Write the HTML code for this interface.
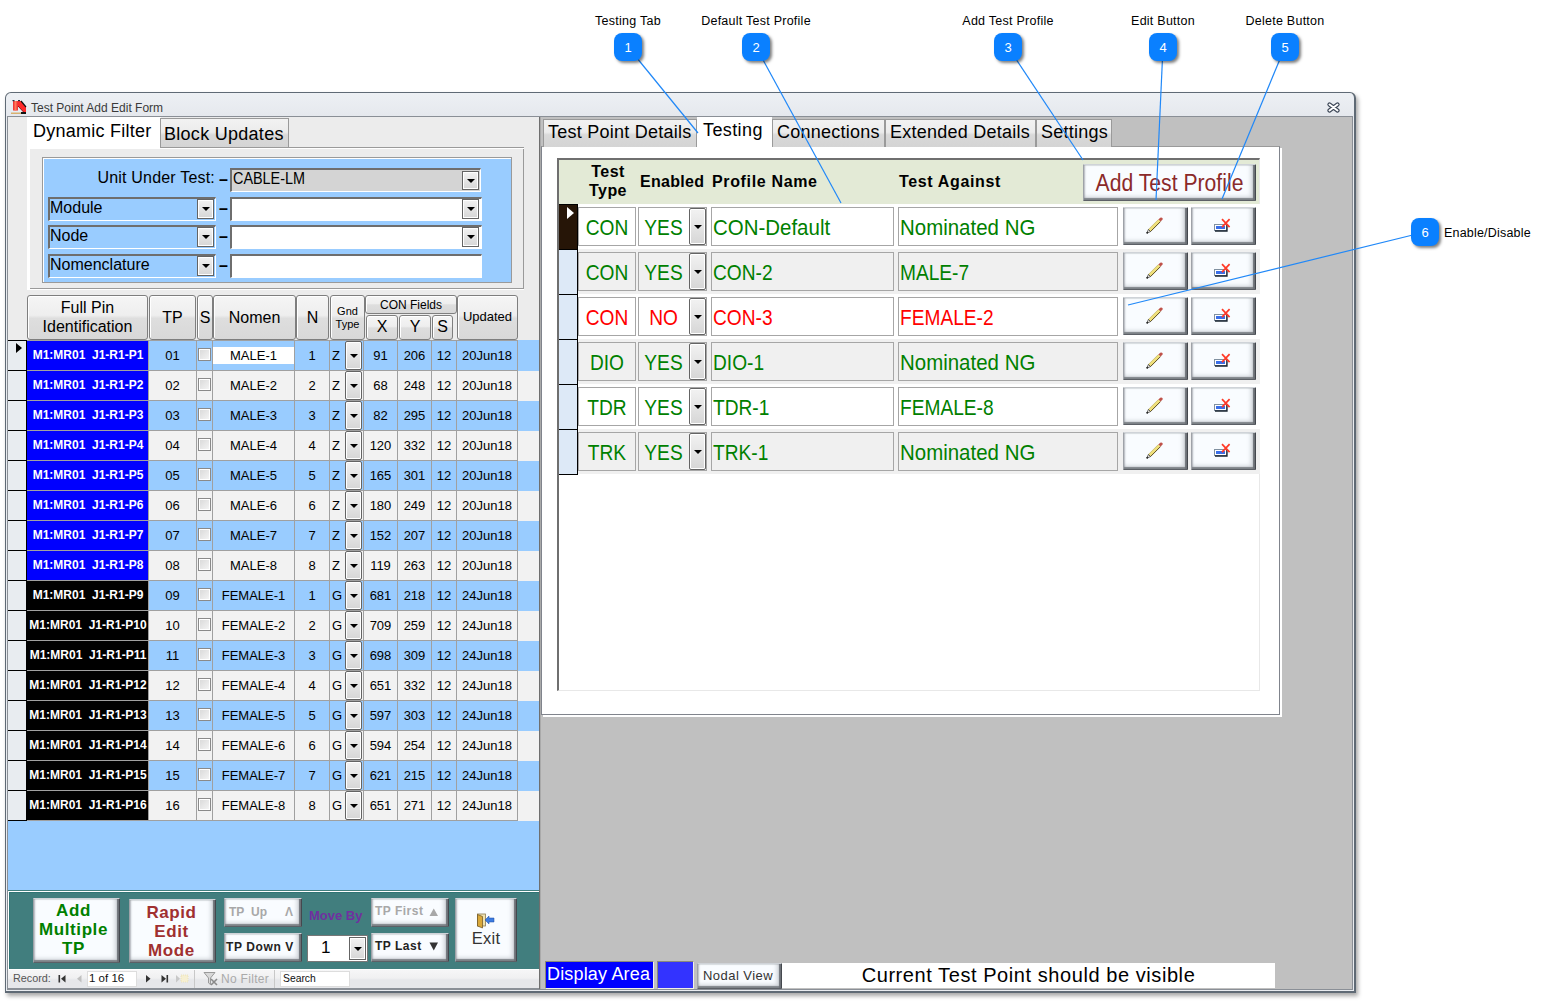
<!DOCTYPE html><html><head><meta charset="utf-8"><style>
*{box-sizing:border-box;margin:0;padding:0}
html,body{width:1547px;height:1002px;overflow:hidden;background:#fff}
body{position:relative;font-family:"Liberation Sans",sans-serif;color:#000}
.a{position:absolute}
.t{position:absolute;white-space:nowrap;line-height:1}
.bev{position:absolute;background:#f9fcff;border-top:1px solid #cfd3d8;border-left:1px solid #9ea2a8;border-right:1px solid #44484e;border-bottom:1px solid #5c6066;border-radius:1px;
 box-shadow:inset -2px 0 1px #6c7076, inset 0 -2px 1px #80848a, inset -5px -4px 4px -1px rgba(120,126,134,.35), inset 2px 1px 2px -1px #b8bcc2}
.hdr{position:absolute;border:1px solid #7e7e7e;border-radius:3px;background:linear-gradient(#f5f5f5 0%,#eeeeee 45%,#dedede 52%,#d8d8d8 100%);box-shadow:inset 1px 1px 0 #fff}
.cb{position:absolute;width:13px;height:13px;border:1px solid #8a8a8a;background:linear-gradient(135deg,#d8d8d8,#f6f6f6);box-shadow:inset 0 0 0 1px #fff}
.dd{position:absolute;border:1px solid #646464;background:linear-gradient(#f2f2f2,#e6e6e6 45%,#d6d6d6);box-shadow:inset 0 0 0 1px #fff}
.dd:after{content:"";position:absolute;left:50%;top:50%;margin-left:-4px;margin-top:-2px;border-left:4px solid transparent;border-right:4px solid transparent;border-top:4px solid #000}
</style></head><body>
<div class="a" style="left:5px;top:92px;width:1351px;height:901px;border:1px solid #5f6a75;border-right-width:2px;border-bottom-width:2px;border-radius:6px 6px 0 0;background:linear-gradient(#edf0f4 0px,#e5e8ed 24px,#e9ecf0 25px);box-shadow:2px 3px 4px rgba(0,0,0,.35)"></div>
<svg class="a" style="left:11px;top:100px" width="16" height="15" viewBox="0 0 16 15"><rect x="0" y="9" width="15" height="5" fill="#e4eef5"/><rect x="0" y="12.5" width="11" height="1.5" fill="#d8b070"/><rect x="10" y="12" width="5" height="2" fill="#111"/><rect x="2" y="1" width="5" height="9.5" fill="#f03838"/><rect x="3.5" y="1" width="2" height="9.5" fill="#ff7a5a"/><path d="M7 1 L10 1 L15 7 L15 12 L12.5 12 L7 6Z" fill="#ff2a2a"/><path d="M10 1 L15 7" stroke="#111" stroke-width="1.2"/><path d="M7 6 L12.5 12" stroke="#700" stroke-width=".8"/><rect x="1.5" y="0" width="2" height="1.2" fill="#234"/><rect x="7" y="0" width="2" height="1.2" fill="#234"/></svg>
<div class="t" style="left:31px;top:102px;font-size:12px;color:#3a3a3a">Test Point Add Edit Form</div>
<svg class="a" style="left:1327px;top:102px" width="13" height="11"><path d="M2.5 2.5 L10.5 8.5 M10.5 2.5 L2.5 8.5" stroke="#3c4656" stroke-width="4.2" stroke-linecap="round"/><path d="M2.5 2.5 L10.5 8.5 M10.5 2.5 L2.5 8.5" stroke="#fff" stroke-width="2" stroke-linecap="round"/></svg>
<div class="a" style="left:7px;top:116px;width:1346px;height:874px;border:1px solid #8a8f96;border-bottom:2px solid #8a8f96;background:#ececec"></div>
<div class="a" style="left:27px;top:117px;width:134px;height:33px;background:#fff"></div>
<div class="t" style="left:33px;top:122px;font-size:18px;letter-spacing:.25px">Dynamic Filter</div>
<div class="a" style="left:160px;top:118px;width:129px;height:30px;border:1px solid #9a9a9a;border-bottom:none;background:linear-gradient(#f2f2f2 0%,#ececec 45%,#d9d9d9 55%,#d4d4d4 100%)"></div>
<div class="t" style="left:164px;top:125px;font-size:18px;letter-spacing:.28px">Block Updates</div>
<div class="a" style="left:27px;top:147px;width:497px;height:143px;background:#fff"></div>
<div class="a" style="left:160px;top:147px;width:364px;height:1px;background:#9a9a9a"></div>
<div class="a" style="left:30px;top:149px;width:494px;height:140px;background:#ececec;border-right:1px solid #9a9a9a;border-bottom:1px solid #9a9a9a"></div>
<div class="a" style="left:42px;top:157px;width:470px;height:126px;border:1px solid #9a9a9a;background:#99ccff;box-shadow:inset 1px 1px 0 #fff"></div>
<div class="t" style="left:60px;top:170px;width:155px;text-align:right;font-size:16px;letter-spacing:.2px">Unit Under Test:</div>
<div class="t" style="left:219px;top:172px;font-size:16px;font-weight:bold">&#8211;</div>
<div class="t" style="left:219px;top:201px;font-size:16px;font-weight:bold">&#8211;</div>
<div class="t" style="left:219px;top:229px;font-size:16px;font-weight:bold">&#8211;</div>
<div class="t" style="left:219px;top:258px;font-size:16px;font-weight:bold">&#8211;</div>
<div class="a" style="left:230px;top:168px;width:251px;height:24px;border:1px solid #fff;border-top:2px solid #6e6e6e;border-left:2px solid #6e6e6e;background:#d4d4d4"></div>
<div class="t" style="left:233px;top:171px;font-size:16px;transform:scaleX(.9);transform-origin:0 0">CABLE-LM</div>
<div class="dd" style="left:462px;top:171px;width:17px;height:19px"></div>
<div class="a" style="left:48px;top:197px;width:168px;height:24px;border:1px solid #fff;border-top:2px solid #6e6e6e;border-left:2px solid #6e6e6e;background:#99ccff"></div>
<div class="t" style="left:50px;top:200px;font-size:16px">Module</div>
<div class="dd" style="left:197px;top:199px;width:17px;height:20px"></div>
<div class="a" style="left:48px;top:225px;width:168px;height:24px;border:1px solid #fff;border-top:2px solid #6e6e6e;border-left:2px solid #6e6e6e;background:#99ccff"></div>
<div class="t" style="left:50px;top:228px;font-size:16px">Node</div>
<div class="dd" style="left:197px;top:227px;width:17px;height:20px"></div>
<div class="a" style="left:48px;top:254px;width:168px;height:24px;border:1px solid #fff;border-top:2px solid #6e6e6e;border-left:2px solid #6e6e6e;background:#99ccff"></div>
<div class="t" style="left:50px;top:257px;font-size:16px">Nomenclature</div>
<div class="dd" style="left:197px;top:256px;width:17px;height:20px"></div>
<div class="a" style="left:230px;top:197px;width:252px;height:24px;border:1px solid #fff;border-top:2px solid #6e6e6e;border-left:2px solid #6e6e6e;background:#fff"></div>
<div class="a" style="left:230px;top:225px;width:252px;height:24px;border:1px solid #fff;border-top:2px solid #6e6e6e;border-left:2px solid #6e6e6e;background:#fff"></div>
<div class="a" style="left:230px;top:254px;width:252px;height:24px;border:1px solid #fff;border-top:2px solid #6e6e6e;border-left:2px solid #6e6e6e;background:#fff"></div>
<div class="dd" style="left:462px;top:199px;width:17px;height:20px"></div>
<div class="dd" style="left:462px;top:227px;width:17px;height:20px"></div>
<div class="a" style="left:8px;top:290px;width:532px;height:601px;background:#99ccff"></div>
<div class="a" style="left:8px;top:290px;width:532px;height:50px;background:#ececec"></div>
<div class="hdr" style="left:27px;top:295px;width:121px;height:45px"></div>
<div class="t" style="left:27px;top:295px;width:121px;height:45px;display:flex;align-items:center;justify-content:center;text-align:center;font-size:16px;line-height:1.15;white-space:normal;">Full Pin<br>Identification</div>
<div class="hdr" style="left:149px;top:295px;width:47px;height:45px"></div>
<div class="t" style="left:149px;top:295px;width:47px;height:45px;display:flex;align-items:center;justify-content:center;text-align:center;font-size:16px;line-height:1.15;white-space:normal;"><span style="position:relative;top:1px">TP</span></div>
<div class="hdr" style="left:197px;top:295px;width:16px;height:45px"></div>
<div class="t" style="left:197px;top:295px;width:16px;height:45px;display:flex;align-items:center;justify-content:center;text-align:center;font-size:16px;line-height:1.15;white-space:normal;"><span style="position:relative;top:1px">S</span></div>
<div class="hdr" style="left:213px;top:295px;width:83px;height:45px"></div>
<div class="t" style="left:213px;top:295px;width:83px;height:45px;display:flex;align-items:center;justify-content:center;text-align:center;font-size:16px;line-height:1.15;white-space:normal;"><span style="position:relative;top:1px">Nomen</span></div>
<div class="hdr" style="left:296px;top:295px;width:33px;height:45px"></div>
<div class="t" style="left:296px;top:295px;width:33px;height:45px;display:flex;align-items:center;justify-content:center;text-align:center;font-size:16px;line-height:1.15;white-space:normal;"><span style="position:relative;top:1px">N</span></div>
<div class="hdr" style="left:330px;top:295px;width:35px;height:45px"></div>
<div class="t" style="left:330px;top:295px;width:35px;height:45px;display:flex;align-items:center;justify-content:center;text-align:center;font-size:11px;line-height:1.15;white-space:normal;">Gnd<br>Type</div>
<div class="hdr" style="left:365px;top:295px;width:92px;height:19px"></div>
<div class="t" style="left:365px;top:295px;width:92px;height:19px;display:flex;align-items:center;justify-content:center;text-align:center;font-size:12px;line-height:1.15;white-space:normal;"><span style="position:relative;top:1px">CON Fields</span></div>
<div class="hdr" style="left:366px;top:315px;width:32px;height:25px"></div>
<div class="t" style="left:366px;top:315px;width:32px;height:25px;display:flex;align-items:center;justify-content:center;text-align:center;font-size:16px;line-height:1.15;white-space:normal;">X</div>
<div class="hdr" style="left:399px;top:315px;width:32px;height:25px"></div>
<div class="t" style="left:399px;top:315px;width:32px;height:25px;display:flex;align-items:center;justify-content:center;text-align:center;font-size:16px;line-height:1.15;white-space:normal;">Y</div>
<div class="hdr" style="left:432px;top:315px;width:21px;height:25px"></div>
<div class="t" style="left:432px;top:315px;width:21px;height:25px;display:flex;align-items:center;justify-content:center;text-align:center;font-size:16px;line-height:1.15;white-space:normal;">S</div>
<div class="hdr" style="left:457px;top:295px;width:61px;height:45px"></div>
<div class="t" style="left:457px;top:295px;width:61px;height:45px;display:flex;align-items:center;justify-content:center;text-align:center;font-size:13px;line-height:1.15;white-space:normal;">Updated</div>
<div class="a" style="left:27px;top:340px;width:491px;height:31px;background:#99ccff;border-top:1px solid #a0a0a0;border-bottom:1px solid #a0a0a0"></div>
<div class="a" style="left:518px;top:341px;width:21px;height:30px;background:#99ccff"></div>
<div class="a" style="left:8px;top:340px;width:19px;height:31px;background:#e8ecf0;border-top:1px solid #000;border-right:1px solid #000"></div>
<div class="a" style="left:27px;top:341px;width:122px;height:29px;background:#0000ff"></div>
<div class="t" style="left:27px;top:349px;width:122px;text-align:center;font-size:12px;font-weight:bold;color:#fff">M1:MR01&nbsp; J1-R1-P1</div>
<div class="a" style="left:148px;top:340px;width:1px;height:31px;background:#a0a0a0"></div>
<div class="a" style="left:196px;top:340px;width:1px;height:31px;background:#a0a0a0"></div>
<div class="a" style="left:212px;top:340px;width:1px;height:31px;background:#a0a0a0"></div>
<div class="a" style="left:294px;top:340px;width:1px;height:31px;background:#a0a0a0"></div>
<div class="a" style="left:329px;top:340px;width:1px;height:31px;background:#a0a0a0"></div>
<div class="a" style="left:363px;top:340px;width:1px;height:31px;background:#a0a0a0"></div>
<div class="a" style="left:397px;top:340px;width:1px;height:31px;background:#a0a0a0"></div>
<div class="a" style="left:431px;top:340px;width:1px;height:31px;background:#a0a0a0"></div>
<div class="a" style="left:456px;top:340px;width:1px;height:31px;background:#a0a0a0"></div>
<div class="a" style="left:517px;top:340px;width:1px;height:31px;background:#a0a0a0"></div>
<div class="t" style="left:149px;top:349px;width:47px;text-align:center;font-size:13px">01</div>
<div class="cb" style="left:198px;top:348px"></div>
<div class="a" style="left:213px;top:347px;width:81px;height:17px;background:#fff"></div>
<div class="t" style="left:213px;top:349px;width:81px;text-align:center;font-size:13px">MALE-1</div>
<div class="t" style="left:295px;top:349px;width:34px;text-align:center;font-size:13px">1</div>
<div class="t" style="left:332px;top:349px;font-size:13px">Z</div>
<div class="dd" style="left:345px;top:341px;width:17px;height:29px;border-radius:2px"></div>
<div class="t" style="left:364px;top:349px;width:33px;text-align:center;font-size:13px">91</div>
<div class="t" style="left:398px;top:349px;width:33px;text-align:center;font-size:13px">206</div>
<div class="t" style="left:432px;top:349px;width:24px;text-align:center;font-size:13px">12</div>
<div class="t" style="left:457px;top:349px;width:60px;text-align:center;font-size:13px">20Jun18</div>
<div class="a" style="left:16px;top:343px;width:0;height:0;border-top:5.5px solid transparent;border-bottom:5.5px solid transparent;border-left:6px solid #000"></div>
<div class="a" style="left:27px;top:370px;width:491px;height:31px;background:#f2f2f2;border-top:1px solid #a0a0a0;border-bottom:1px solid #a0a0a0"></div>
<div class="a" style="left:518px;top:371px;width:21px;height:30px;background:#f2f2f2"></div>
<div class="a" style="left:8px;top:370px;width:19px;height:31px;background:#e8ecf0;border-top:1px solid #000;border-right:1px solid #000"></div>
<div class="a" style="left:27px;top:371px;width:122px;height:29px;background:#0000ff"></div>
<div class="t" style="left:27px;top:379px;width:122px;text-align:center;font-size:12px;font-weight:bold;color:#fff">M1:MR01&nbsp; J1-R1-P2</div>
<div class="a" style="left:148px;top:370px;width:1px;height:31px;background:#a0a0a0"></div>
<div class="a" style="left:196px;top:370px;width:1px;height:31px;background:#a0a0a0"></div>
<div class="a" style="left:212px;top:370px;width:1px;height:31px;background:#a0a0a0"></div>
<div class="a" style="left:294px;top:370px;width:1px;height:31px;background:#a0a0a0"></div>
<div class="a" style="left:329px;top:370px;width:1px;height:31px;background:#a0a0a0"></div>
<div class="a" style="left:363px;top:370px;width:1px;height:31px;background:#a0a0a0"></div>
<div class="a" style="left:397px;top:370px;width:1px;height:31px;background:#a0a0a0"></div>
<div class="a" style="left:431px;top:370px;width:1px;height:31px;background:#a0a0a0"></div>
<div class="a" style="left:456px;top:370px;width:1px;height:31px;background:#a0a0a0"></div>
<div class="a" style="left:517px;top:370px;width:1px;height:31px;background:#a0a0a0"></div>
<div class="t" style="left:149px;top:379px;width:47px;text-align:center;font-size:13px">02</div>
<div class="cb" style="left:198px;top:378px"></div>
<div class="t" style="left:213px;top:379px;width:81px;text-align:center;font-size:13px">MALE-2</div>
<div class="t" style="left:295px;top:379px;width:34px;text-align:center;font-size:13px">2</div>
<div class="t" style="left:332px;top:379px;font-size:13px">Z</div>
<div class="dd" style="left:345px;top:371px;width:17px;height:29px;border-radius:2px"></div>
<div class="t" style="left:364px;top:379px;width:33px;text-align:center;font-size:13px">68</div>
<div class="t" style="left:398px;top:379px;width:33px;text-align:center;font-size:13px">248</div>
<div class="t" style="left:432px;top:379px;width:24px;text-align:center;font-size:13px">12</div>
<div class="t" style="left:457px;top:379px;width:60px;text-align:center;font-size:13px">20Jun18</div>
<div class="a" style="left:27px;top:400px;width:491px;height:31px;background:#99ccff;border-top:1px solid #a0a0a0;border-bottom:1px solid #a0a0a0"></div>
<div class="a" style="left:518px;top:401px;width:21px;height:30px;background:#99ccff"></div>
<div class="a" style="left:8px;top:400px;width:19px;height:31px;background:#e8ecf0;border-top:1px solid #000;border-right:1px solid #000"></div>
<div class="a" style="left:27px;top:401px;width:122px;height:29px;background:#0000ff"></div>
<div class="t" style="left:27px;top:409px;width:122px;text-align:center;font-size:12px;font-weight:bold;color:#fff">M1:MR01&nbsp; J1-R1-P3</div>
<div class="a" style="left:148px;top:400px;width:1px;height:31px;background:#a0a0a0"></div>
<div class="a" style="left:196px;top:400px;width:1px;height:31px;background:#a0a0a0"></div>
<div class="a" style="left:212px;top:400px;width:1px;height:31px;background:#a0a0a0"></div>
<div class="a" style="left:294px;top:400px;width:1px;height:31px;background:#a0a0a0"></div>
<div class="a" style="left:329px;top:400px;width:1px;height:31px;background:#a0a0a0"></div>
<div class="a" style="left:363px;top:400px;width:1px;height:31px;background:#a0a0a0"></div>
<div class="a" style="left:397px;top:400px;width:1px;height:31px;background:#a0a0a0"></div>
<div class="a" style="left:431px;top:400px;width:1px;height:31px;background:#a0a0a0"></div>
<div class="a" style="left:456px;top:400px;width:1px;height:31px;background:#a0a0a0"></div>
<div class="a" style="left:517px;top:400px;width:1px;height:31px;background:#a0a0a0"></div>
<div class="t" style="left:149px;top:409px;width:47px;text-align:center;font-size:13px">03</div>
<div class="cb" style="left:198px;top:408px"></div>
<div class="t" style="left:213px;top:409px;width:81px;text-align:center;font-size:13px">MALE-3</div>
<div class="t" style="left:295px;top:409px;width:34px;text-align:center;font-size:13px">3</div>
<div class="t" style="left:332px;top:409px;font-size:13px">Z</div>
<div class="dd" style="left:345px;top:401px;width:17px;height:29px;border-radius:2px"></div>
<div class="t" style="left:364px;top:409px;width:33px;text-align:center;font-size:13px">82</div>
<div class="t" style="left:398px;top:409px;width:33px;text-align:center;font-size:13px">295</div>
<div class="t" style="left:432px;top:409px;width:24px;text-align:center;font-size:13px">12</div>
<div class="t" style="left:457px;top:409px;width:60px;text-align:center;font-size:13px">20Jun18</div>
<div class="a" style="left:27px;top:430px;width:491px;height:31px;background:#f2f2f2;border-top:1px solid #a0a0a0;border-bottom:1px solid #a0a0a0"></div>
<div class="a" style="left:518px;top:431px;width:21px;height:30px;background:#f2f2f2"></div>
<div class="a" style="left:8px;top:430px;width:19px;height:31px;background:#e8ecf0;border-top:1px solid #000;border-right:1px solid #000"></div>
<div class="a" style="left:27px;top:431px;width:122px;height:29px;background:#0000ff"></div>
<div class="t" style="left:27px;top:439px;width:122px;text-align:center;font-size:12px;font-weight:bold;color:#fff">M1:MR01&nbsp; J1-R1-P4</div>
<div class="a" style="left:148px;top:430px;width:1px;height:31px;background:#a0a0a0"></div>
<div class="a" style="left:196px;top:430px;width:1px;height:31px;background:#a0a0a0"></div>
<div class="a" style="left:212px;top:430px;width:1px;height:31px;background:#a0a0a0"></div>
<div class="a" style="left:294px;top:430px;width:1px;height:31px;background:#a0a0a0"></div>
<div class="a" style="left:329px;top:430px;width:1px;height:31px;background:#a0a0a0"></div>
<div class="a" style="left:363px;top:430px;width:1px;height:31px;background:#a0a0a0"></div>
<div class="a" style="left:397px;top:430px;width:1px;height:31px;background:#a0a0a0"></div>
<div class="a" style="left:431px;top:430px;width:1px;height:31px;background:#a0a0a0"></div>
<div class="a" style="left:456px;top:430px;width:1px;height:31px;background:#a0a0a0"></div>
<div class="a" style="left:517px;top:430px;width:1px;height:31px;background:#a0a0a0"></div>
<div class="t" style="left:149px;top:439px;width:47px;text-align:center;font-size:13px">04</div>
<div class="cb" style="left:198px;top:438px"></div>
<div class="t" style="left:213px;top:439px;width:81px;text-align:center;font-size:13px">MALE-4</div>
<div class="t" style="left:295px;top:439px;width:34px;text-align:center;font-size:13px">4</div>
<div class="t" style="left:332px;top:439px;font-size:13px">Z</div>
<div class="dd" style="left:345px;top:431px;width:17px;height:29px;border-radius:2px"></div>
<div class="t" style="left:364px;top:439px;width:33px;text-align:center;font-size:13px">120</div>
<div class="t" style="left:398px;top:439px;width:33px;text-align:center;font-size:13px">332</div>
<div class="t" style="left:432px;top:439px;width:24px;text-align:center;font-size:13px">12</div>
<div class="t" style="left:457px;top:439px;width:60px;text-align:center;font-size:13px">20Jun18</div>
<div class="a" style="left:27px;top:460px;width:491px;height:31px;background:#99ccff;border-top:1px solid #a0a0a0;border-bottom:1px solid #a0a0a0"></div>
<div class="a" style="left:518px;top:461px;width:21px;height:30px;background:#99ccff"></div>
<div class="a" style="left:8px;top:460px;width:19px;height:31px;background:#e8ecf0;border-top:1px solid #000;border-right:1px solid #000"></div>
<div class="a" style="left:27px;top:461px;width:122px;height:29px;background:#0000ff"></div>
<div class="t" style="left:27px;top:469px;width:122px;text-align:center;font-size:12px;font-weight:bold;color:#fff">M1:MR01&nbsp; J1-R1-P5</div>
<div class="a" style="left:148px;top:460px;width:1px;height:31px;background:#a0a0a0"></div>
<div class="a" style="left:196px;top:460px;width:1px;height:31px;background:#a0a0a0"></div>
<div class="a" style="left:212px;top:460px;width:1px;height:31px;background:#a0a0a0"></div>
<div class="a" style="left:294px;top:460px;width:1px;height:31px;background:#a0a0a0"></div>
<div class="a" style="left:329px;top:460px;width:1px;height:31px;background:#a0a0a0"></div>
<div class="a" style="left:363px;top:460px;width:1px;height:31px;background:#a0a0a0"></div>
<div class="a" style="left:397px;top:460px;width:1px;height:31px;background:#a0a0a0"></div>
<div class="a" style="left:431px;top:460px;width:1px;height:31px;background:#a0a0a0"></div>
<div class="a" style="left:456px;top:460px;width:1px;height:31px;background:#a0a0a0"></div>
<div class="a" style="left:517px;top:460px;width:1px;height:31px;background:#a0a0a0"></div>
<div class="t" style="left:149px;top:469px;width:47px;text-align:center;font-size:13px">05</div>
<div class="cb" style="left:198px;top:468px"></div>
<div class="t" style="left:213px;top:469px;width:81px;text-align:center;font-size:13px">MALE-5</div>
<div class="t" style="left:295px;top:469px;width:34px;text-align:center;font-size:13px">5</div>
<div class="t" style="left:332px;top:469px;font-size:13px">Z</div>
<div class="dd" style="left:345px;top:461px;width:17px;height:29px;border-radius:2px"></div>
<div class="t" style="left:364px;top:469px;width:33px;text-align:center;font-size:13px">165</div>
<div class="t" style="left:398px;top:469px;width:33px;text-align:center;font-size:13px">301</div>
<div class="t" style="left:432px;top:469px;width:24px;text-align:center;font-size:13px">12</div>
<div class="t" style="left:457px;top:469px;width:60px;text-align:center;font-size:13px">20Jun18</div>
<div class="a" style="left:27px;top:490px;width:491px;height:31px;background:#f2f2f2;border-top:1px solid #a0a0a0;border-bottom:1px solid #a0a0a0"></div>
<div class="a" style="left:518px;top:491px;width:21px;height:30px;background:#f2f2f2"></div>
<div class="a" style="left:8px;top:490px;width:19px;height:31px;background:#e8ecf0;border-top:1px solid #000;border-right:1px solid #000"></div>
<div class="a" style="left:27px;top:491px;width:122px;height:29px;background:#0000ff"></div>
<div class="t" style="left:27px;top:499px;width:122px;text-align:center;font-size:12px;font-weight:bold;color:#fff">M1:MR01&nbsp; J1-R1-P6</div>
<div class="a" style="left:148px;top:490px;width:1px;height:31px;background:#a0a0a0"></div>
<div class="a" style="left:196px;top:490px;width:1px;height:31px;background:#a0a0a0"></div>
<div class="a" style="left:212px;top:490px;width:1px;height:31px;background:#a0a0a0"></div>
<div class="a" style="left:294px;top:490px;width:1px;height:31px;background:#a0a0a0"></div>
<div class="a" style="left:329px;top:490px;width:1px;height:31px;background:#a0a0a0"></div>
<div class="a" style="left:363px;top:490px;width:1px;height:31px;background:#a0a0a0"></div>
<div class="a" style="left:397px;top:490px;width:1px;height:31px;background:#a0a0a0"></div>
<div class="a" style="left:431px;top:490px;width:1px;height:31px;background:#a0a0a0"></div>
<div class="a" style="left:456px;top:490px;width:1px;height:31px;background:#a0a0a0"></div>
<div class="a" style="left:517px;top:490px;width:1px;height:31px;background:#a0a0a0"></div>
<div class="t" style="left:149px;top:499px;width:47px;text-align:center;font-size:13px">06</div>
<div class="cb" style="left:198px;top:498px"></div>
<div class="t" style="left:213px;top:499px;width:81px;text-align:center;font-size:13px">MALE-6</div>
<div class="t" style="left:295px;top:499px;width:34px;text-align:center;font-size:13px">6</div>
<div class="t" style="left:332px;top:499px;font-size:13px">Z</div>
<div class="dd" style="left:345px;top:491px;width:17px;height:29px;border-radius:2px"></div>
<div class="t" style="left:364px;top:499px;width:33px;text-align:center;font-size:13px">180</div>
<div class="t" style="left:398px;top:499px;width:33px;text-align:center;font-size:13px">249</div>
<div class="t" style="left:432px;top:499px;width:24px;text-align:center;font-size:13px">12</div>
<div class="t" style="left:457px;top:499px;width:60px;text-align:center;font-size:13px">20Jun18</div>
<div class="a" style="left:27px;top:520px;width:491px;height:31px;background:#99ccff;border-top:1px solid #a0a0a0;border-bottom:1px solid #a0a0a0"></div>
<div class="a" style="left:518px;top:521px;width:21px;height:30px;background:#99ccff"></div>
<div class="a" style="left:8px;top:520px;width:19px;height:31px;background:#e8ecf0;border-top:1px solid #000;border-right:1px solid #000"></div>
<div class="a" style="left:27px;top:521px;width:122px;height:29px;background:#0000ff"></div>
<div class="t" style="left:27px;top:529px;width:122px;text-align:center;font-size:12px;font-weight:bold;color:#fff">M1:MR01&nbsp; J1-R1-P7</div>
<div class="a" style="left:148px;top:520px;width:1px;height:31px;background:#a0a0a0"></div>
<div class="a" style="left:196px;top:520px;width:1px;height:31px;background:#a0a0a0"></div>
<div class="a" style="left:212px;top:520px;width:1px;height:31px;background:#a0a0a0"></div>
<div class="a" style="left:294px;top:520px;width:1px;height:31px;background:#a0a0a0"></div>
<div class="a" style="left:329px;top:520px;width:1px;height:31px;background:#a0a0a0"></div>
<div class="a" style="left:363px;top:520px;width:1px;height:31px;background:#a0a0a0"></div>
<div class="a" style="left:397px;top:520px;width:1px;height:31px;background:#a0a0a0"></div>
<div class="a" style="left:431px;top:520px;width:1px;height:31px;background:#a0a0a0"></div>
<div class="a" style="left:456px;top:520px;width:1px;height:31px;background:#a0a0a0"></div>
<div class="a" style="left:517px;top:520px;width:1px;height:31px;background:#a0a0a0"></div>
<div class="t" style="left:149px;top:529px;width:47px;text-align:center;font-size:13px">07</div>
<div class="cb" style="left:198px;top:528px"></div>
<div class="t" style="left:213px;top:529px;width:81px;text-align:center;font-size:13px">MALE-7</div>
<div class="t" style="left:295px;top:529px;width:34px;text-align:center;font-size:13px">7</div>
<div class="t" style="left:332px;top:529px;font-size:13px">Z</div>
<div class="dd" style="left:345px;top:521px;width:17px;height:29px;border-radius:2px"></div>
<div class="t" style="left:364px;top:529px;width:33px;text-align:center;font-size:13px">152</div>
<div class="t" style="left:398px;top:529px;width:33px;text-align:center;font-size:13px">207</div>
<div class="t" style="left:432px;top:529px;width:24px;text-align:center;font-size:13px">12</div>
<div class="t" style="left:457px;top:529px;width:60px;text-align:center;font-size:13px">20Jun18</div>
<div class="a" style="left:27px;top:550px;width:491px;height:31px;background:#f2f2f2;border-top:1px solid #a0a0a0;border-bottom:1px solid #a0a0a0"></div>
<div class="a" style="left:518px;top:551px;width:21px;height:30px;background:#f2f2f2"></div>
<div class="a" style="left:8px;top:550px;width:19px;height:31px;background:#e8ecf0;border-top:1px solid #000;border-right:1px solid #000"></div>
<div class="a" style="left:27px;top:551px;width:122px;height:29px;background:#0000ff"></div>
<div class="t" style="left:27px;top:559px;width:122px;text-align:center;font-size:12px;font-weight:bold;color:#fff">M1:MR01&nbsp; J1-R1-P8</div>
<div class="a" style="left:148px;top:550px;width:1px;height:31px;background:#a0a0a0"></div>
<div class="a" style="left:196px;top:550px;width:1px;height:31px;background:#a0a0a0"></div>
<div class="a" style="left:212px;top:550px;width:1px;height:31px;background:#a0a0a0"></div>
<div class="a" style="left:294px;top:550px;width:1px;height:31px;background:#a0a0a0"></div>
<div class="a" style="left:329px;top:550px;width:1px;height:31px;background:#a0a0a0"></div>
<div class="a" style="left:363px;top:550px;width:1px;height:31px;background:#a0a0a0"></div>
<div class="a" style="left:397px;top:550px;width:1px;height:31px;background:#a0a0a0"></div>
<div class="a" style="left:431px;top:550px;width:1px;height:31px;background:#a0a0a0"></div>
<div class="a" style="left:456px;top:550px;width:1px;height:31px;background:#a0a0a0"></div>
<div class="a" style="left:517px;top:550px;width:1px;height:31px;background:#a0a0a0"></div>
<div class="t" style="left:149px;top:559px;width:47px;text-align:center;font-size:13px">08</div>
<div class="cb" style="left:198px;top:558px"></div>
<div class="t" style="left:213px;top:559px;width:81px;text-align:center;font-size:13px">MALE-8</div>
<div class="t" style="left:295px;top:559px;width:34px;text-align:center;font-size:13px">8</div>
<div class="t" style="left:332px;top:559px;font-size:13px">Z</div>
<div class="dd" style="left:345px;top:551px;width:17px;height:29px;border-radius:2px"></div>
<div class="t" style="left:364px;top:559px;width:33px;text-align:center;font-size:13px">119</div>
<div class="t" style="left:398px;top:559px;width:33px;text-align:center;font-size:13px">263</div>
<div class="t" style="left:432px;top:559px;width:24px;text-align:center;font-size:13px">12</div>
<div class="t" style="left:457px;top:559px;width:60px;text-align:center;font-size:13px">20Jun18</div>
<div class="a" style="left:27px;top:580px;width:491px;height:31px;background:#99ccff;border-top:1px solid #a0a0a0;border-bottom:1px solid #a0a0a0"></div>
<div class="a" style="left:518px;top:581px;width:21px;height:30px;background:#99ccff"></div>
<div class="a" style="left:8px;top:580px;width:19px;height:31px;background:#e8ecf0;border-top:1px solid #000;border-right:1px solid #000"></div>
<div class="a" style="left:27px;top:581px;width:122px;height:29px;background:#000"></div>
<div class="t" style="left:27px;top:589px;width:122px;text-align:center;font-size:12px;font-weight:bold;color:#fff">M1:MR01&nbsp; J1-R1-P9</div>
<div class="a" style="left:148px;top:580px;width:1px;height:31px;background:#a0a0a0"></div>
<div class="a" style="left:196px;top:580px;width:1px;height:31px;background:#a0a0a0"></div>
<div class="a" style="left:212px;top:580px;width:1px;height:31px;background:#a0a0a0"></div>
<div class="a" style="left:294px;top:580px;width:1px;height:31px;background:#a0a0a0"></div>
<div class="a" style="left:329px;top:580px;width:1px;height:31px;background:#a0a0a0"></div>
<div class="a" style="left:363px;top:580px;width:1px;height:31px;background:#a0a0a0"></div>
<div class="a" style="left:397px;top:580px;width:1px;height:31px;background:#a0a0a0"></div>
<div class="a" style="left:431px;top:580px;width:1px;height:31px;background:#a0a0a0"></div>
<div class="a" style="left:456px;top:580px;width:1px;height:31px;background:#a0a0a0"></div>
<div class="a" style="left:517px;top:580px;width:1px;height:31px;background:#a0a0a0"></div>
<div class="t" style="left:149px;top:589px;width:47px;text-align:center;font-size:13px">09</div>
<div class="cb" style="left:198px;top:588px"></div>
<div class="t" style="left:213px;top:589px;width:81px;text-align:center;font-size:13px">FEMALE-1</div>
<div class="t" style="left:295px;top:589px;width:34px;text-align:center;font-size:13px">1</div>
<div class="t" style="left:332px;top:589px;font-size:13px">G</div>
<div class="dd" style="left:345px;top:581px;width:17px;height:29px;border-radius:2px"></div>
<div class="t" style="left:364px;top:589px;width:33px;text-align:center;font-size:13px">681</div>
<div class="t" style="left:398px;top:589px;width:33px;text-align:center;font-size:13px">218</div>
<div class="t" style="left:432px;top:589px;width:24px;text-align:center;font-size:13px">12</div>
<div class="t" style="left:457px;top:589px;width:60px;text-align:center;font-size:13px">24Jun18</div>
<div class="a" style="left:27px;top:610px;width:491px;height:31px;background:#f2f2f2;border-top:1px solid #a0a0a0;border-bottom:1px solid #a0a0a0"></div>
<div class="a" style="left:518px;top:611px;width:21px;height:30px;background:#f2f2f2"></div>
<div class="a" style="left:8px;top:610px;width:19px;height:31px;background:#e8ecf0;border-top:1px solid #000;border-right:1px solid #000"></div>
<div class="a" style="left:27px;top:611px;width:122px;height:29px;background:#000"></div>
<div class="t" style="left:27px;top:619px;width:122px;text-align:center;font-size:12px;font-weight:bold;color:#fff">M1:MR01&nbsp; J1-R1-P10</div>
<div class="a" style="left:148px;top:610px;width:1px;height:31px;background:#a0a0a0"></div>
<div class="a" style="left:196px;top:610px;width:1px;height:31px;background:#a0a0a0"></div>
<div class="a" style="left:212px;top:610px;width:1px;height:31px;background:#a0a0a0"></div>
<div class="a" style="left:294px;top:610px;width:1px;height:31px;background:#a0a0a0"></div>
<div class="a" style="left:329px;top:610px;width:1px;height:31px;background:#a0a0a0"></div>
<div class="a" style="left:363px;top:610px;width:1px;height:31px;background:#a0a0a0"></div>
<div class="a" style="left:397px;top:610px;width:1px;height:31px;background:#a0a0a0"></div>
<div class="a" style="left:431px;top:610px;width:1px;height:31px;background:#a0a0a0"></div>
<div class="a" style="left:456px;top:610px;width:1px;height:31px;background:#a0a0a0"></div>
<div class="a" style="left:517px;top:610px;width:1px;height:31px;background:#a0a0a0"></div>
<div class="t" style="left:149px;top:619px;width:47px;text-align:center;font-size:13px">10</div>
<div class="cb" style="left:198px;top:618px"></div>
<div class="t" style="left:213px;top:619px;width:81px;text-align:center;font-size:13px">FEMALE-2</div>
<div class="t" style="left:295px;top:619px;width:34px;text-align:center;font-size:13px">2</div>
<div class="t" style="left:332px;top:619px;font-size:13px">G</div>
<div class="dd" style="left:345px;top:611px;width:17px;height:29px;border-radius:2px"></div>
<div class="t" style="left:364px;top:619px;width:33px;text-align:center;font-size:13px">709</div>
<div class="t" style="left:398px;top:619px;width:33px;text-align:center;font-size:13px">259</div>
<div class="t" style="left:432px;top:619px;width:24px;text-align:center;font-size:13px">12</div>
<div class="t" style="left:457px;top:619px;width:60px;text-align:center;font-size:13px">24Jun18</div>
<div class="a" style="left:27px;top:640px;width:491px;height:31px;background:#99ccff;border-top:1px solid #a0a0a0;border-bottom:1px solid #a0a0a0"></div>
<div class="a" style="left:518px;top:641px;width:21px;height:30px;background:#99ccff"></div>
<div class="a" style="left:8px;top:640px;width:19px;height:31px;background:#e8ecf0;border-top:1px solid #000;border-right:1px solid #000"></div>
<div class="a" style="left:27px;top:641px;width:122px;height:29px;background:#000"></div>
<div class="t" style="left:27px;top:649px;width:122px;text-align:center;font-size:12px;font-weight:bold;color:#fff">M1:MR01&nbsp; J1-R1-P11</div>
<div class="a" style="left:148px;top:640px;width:1px;height:31px;background:#a0a0a0"></div>
<div class="a" style="left:196px;top:640px;width:1px;height:31px;background:#a0a0a0"></div>
<div class="a" style="left:212px;top:640px;width:1px;height:31px;background:#a0a0a0"></div>
<div class="a" style="left:294px;top:640px;width:1px;height:31px;background:#a0a0a0"></div>
<div class="a" style="left:329px;top:640px;width:1px;height:31px;background:#a0a0a0"></div>
<div class="a" style="left:363px;top:640px;width:1px;height:31px;background:#a0a0a0"></div>
<div class="a" style="left:397px;top:640px;width:1px;height:31px;background:#a0a0a0"></div>
<div class="a" style="left:431px;top:640px;width:1px;height:31px;background:#a0a0a0"></div>
<div class="a" style="left:456px;top:640px;width:1px;height:31px;background:#a0a0a0"></div>
<div class="a" style="left:517px;top:640px;width:1px;height:31px;background:#a0a0a0"></div>
<div class="t" style="left:149px;top:649px;width:47px;text-align:center;font-size:13px">11</div>
<div class="cb" style="left:198px;top:648px"></div>
<div class="t" style="left:213px;top:649px;width:81px;text-align:center;font-size:13px">FEMALE-3</div>
<div class="t" style="left:295px;top:649px;width:34px;text-align:center;font-size:13px">3</div>
<div class="t" style="left:332px;top:649px;font-size:13px">G</div>
<div class="dd" style="left:345px;top:641px;width:17px;height:29px;border-radius:2px"></div>
<div class="t" style="left:364px;top:649px;width:33px;text-align:center;font-size:13px">698</div>
<div class="t" style="left:398px;top:649px;width:33px;text-align:center;font-size:13px">309</div>
<div class="t" style="left:432px;top:649px;width:24px;text-align:center;font-size:13px">12</div>
<div class="t" style="left:457px;top:649px;width:60px;text-align:center;font-size:13px">24Jun18</div>
<div class="a" style="left:27px;top:670px;width:491px;height:31px;background:#f2f2f2;border-top:1px solid #a0a0a0;border-bottom:1px solid #a0a0a0"></div>
<div class="a" style="left:518px;top:671px;width:21px;height:30px;background:#f2f2f2"></div>
<div class="a" style="left:8px;top:670px;width:19px;height:31px;background:#e8ecf0;border-top:1px solid #000;border-right:1px solid #000"></div>
<div class="a" style="left:27px;top:671px;width:122px;height:29px;background:#000"></div>
<div class="t" style="left:27px;top:679px;width:122px;text-align:center;font-size:12px;font-weight:bold;color:#fff">M1:MR01&nbsp; J1-R1-P12</div>
<div class="a" style="left:148px;top:670px;width:1px;height:31px;background:#a0a0a0"></div>
<div class="a" style="left:196px;top:670px;width:1px;height:31px;background:#a0a0a0"></div>
<div class="a" style="left:212px;top:670px;width:1px;height:31px;background:#a0a0a0"></div>
<div class="a" style="left:294px;top:670px;width:1px;height:31px;background:#a0a0a0"></div>
<div class="a" style="left:329px;top:670px;width:1px;height:31px;background:#a0a0a0"></div>
<div class="a" style="left:363px;top:670px;width:1px;height:31px;background:#a0a0a0"></div>
<div class="a" style="left:397px;top:670px;width:1px;height:31px;background:#a0a0a0"></div>
<div class="a" style="left:431px;top:670px;width:1px;height:31px;background:#a0a0a0"></div>
<div class="a" style="left:456px;top:670px;width:1px;height:31px;background:#a0a0a0"></div>
<div class="a" style="left:517px;top:670px;width:1px;height:31px;background:#a0a0a0"></div>
<div class="t" style="left:149px;top:679px;width:47px;text-align:center;font-size:13px">12</div>
<div class="cb" style="left:198px;top:678px"></div>
<div class="t" style="left:213px;top:679px;width:81px;text-align:center;font-size:13px">FEMALE-4</div>
<div class="t" style="left:295px;top:679px;width:34px;text-align:center;font-size:13px">4</div>
<div class="t" style="left:332px;top:679px;font-size:13px">G</div>
<div class="dd" style="left:345px;top:671px;width:17px;height:29px;border-radius:2px"></div>
<div class="t" style="left:364px;top:679px;width:33px;text-align:center;font-size:13px">651</div>
<div class="t" style="left:398px;top:679px;width:33px;text-align:center;font-size:13px">332</div>
<div class="t" style="left:432px;top:679px;width:24px;text-align:center;font-size:13px">12</div>
<div class="t" style="left:457px;top:679px;width:60px;text-align:center;font-size:13px">24Jun18</div>
<div class="a" style="left:27px;top:700px;width:491px;height:31px;background:#99ccff;border-top:1px solid #a0a0a0;border-bottom:1px solid #a0a0a0"></div>
<div class="a" style="left:518px;top:701px;width:21px;height:30px;background:#99ccff"></div>
<div class="a" style="left:8px;top:700px;width:19px;height:31px;background:#e8ecf0;border-top:1px solid #000;border-right:1px solid #000"></div>
<div class="a" style="left:27px;top:701px;width:122px;height:29px;background:#000"></div>
<div class="t" style="left:27px;top:709px;width:122px;text-align:center;font-size:12px;font-weight:bold;color:#fff">M1:MR01&nbsp; J1-R1-P13</div>
<div class="a" style="left:148px;top:700px;width:1px;height:31px;background:#a0a0a0"></div>
<div class="a" style="left:196px;top:700px;width:1px;height:31px;background:#a0a0a0"></div>
<div class="a" style="left:212px;top:700px;width:1px;height:31px;background:#a0a0a0"></div>
<div class="a" style="left:294px;top:700px;width:1px;height:31px;background:#a0a0a0"></div>
<div class="a" style="left:329px;top:700px;width:1px;height:31px;background:#a0a0a0"></div>
<div class="a" style="left:363px;top:700px;width:1px;height:31px;background:#a0a0a0"></div>
<div class="a" style="left:397px;top:700px;width:1px;height:31px;background:#a0a0a0"></div>
<div class="a" style="left:431px;top:700px;width:1px;height:31px;background:#a0a0a0"></div>
<div class="a" style="left:456px;top:700px;width:1px;height:31px;background:#a0a0a0"></div>
<div class="a" style="left:517px;top:700px;width:1px;height:31px;background:#a0a0a0"></div>
<div class="t" style="left:149px;top:709px;width:47px;text-align:center;font-size:13px">13</div>
<div class="cb" style="left:198px;top:708px"></div>
<div class="t" style="left:213px;top:709px;width:81px;text-align:center;font-size:13px">FEMALE-5</div>
<div class="t" style="left:295px;top:709px;width:34px;text-align:center;font-size:13px">5</div>
<div class="t" style="left:332px;top:709px;font-size:13px">G</div>
<div class="dd" style="left:345px;top:701px;width:17px;height:29px;border-radius:2px"></div>
<div class="t" style="left:364px;top:709px;width:33px;text-align:center;font-size:13px">597</div>
<div class="t" style="left:398px;top:709px;width:33px;text-align:center;font-size:13px">303</div>
<div class="t" style="left:432px;top:709px;width:24px;text-align:center;font-size:13px">12</div>
<div class="t" style="left:457px;top:709px;width:60px;text-align:center;font-size:13px">24Jun18</div>
<div class="a" style="left:27px;top:730px;width:491px;height:31px;background:#f2f2f2;border-top:1px solid #a0a0a0;border-bottom:1px solid #a0a0a0"></div>
<div class="a" style="left:518px;top:731px;width:21px;height:30px;background:#f2f2f2"></div>
<div class="a" style="left:8px;top:730px;width:19px;height:31px;background:#e8ecf0;border-top:1px solid #000;border-right:1px solid #000"></div>
<div class="a" style="left:27px;top:731px;width:122px;height:29px;background:#000"></div>
<div class="t" style="left:27px;top:739px;width:122px;text-align:center;font-size:12px;font-weight:bold;color:#fff">M1:MR01&nbsp; J1-R1-P14</div>
<div class="a" style="left:148px;top:730px;width:1px;height:31px;background:#a0a0a0"></div>
<div class="a" style="left:196px;top:730px;width:1px;height:31px;background:#a0a0a0"></div>
<div class="a" style="left:212px;top:730px;width:1px;height:31px;background:#a0a0a0"></div>
<div class="a" style="left:294px;top:730px;width:1px;height:31px;background:#a0a0a0"></div>
<div class="a" style="left:329px;top:730px;width:1px;height:31px;background:#a0a0a0"></div>
<div class="a" style="left:363px;top:730px;width:1px;height:31px;background:#a0a0a0"></div>
<div class="a" style="left:397px;top:730px;width:1px;height:31px;background:#a0a0a0"></div>
<div class="a" style="left:431px;top:730px;width:1px;height:31px;background:#a0a0a0"></div>
<div class="a" style="left:456px;top:730px;width:1px;height:31px;background:#a0a0a0"></div>
<div class="a" style="left:517px;top:730px;width:1px;height:31px;background:#a0a0a0"></div>
<div class="t" style="left:149px;top:739px;width:47px;text-align:center;font-size:13px">14</div>
<div class="cb" style="left:198px;top:738px"></div>
<div class="t" style="left:213px;top:739px;width:81px;text-align:center;font-size:13px">FEMALE-6</div>
<div class="t" style="left:295px;top:739px;width:34px;text-align:center;font-size:13px">6</div>
<div class="t" style="left:332px;top:739px;font-size:13px">G</div>
<div class="dd" style="left:345px;top:731px;width:17px;height:29px;border-radius:2px"></div>
<div class="t" style="left:364px;top:739px;width:33px;text-align:center;font-size:13px">594</div>
<div class="t" style="left:398px;top:739px;width:33px;text-align:center;font-size:13px">254</div>
<div class="t" style="left:432px;top:739px;width:24px;text-align:center;font-size:13px">12</div>
<div class="t" style="left:457px;top:739px;width:60px;text-align:center;font-size:13px">24Jun18</div>
<div class="a" style="left:27px;top:760px;width:491px;height:31px;background:#99ccff;border-top:1px solid #a0a0a0;border-bottom:1px solid #a0a0a0"></div>
<div class="a" style="left:518px;top:761px;width:21px;height:30px;background:#99ccff"></div>
<div class="a" style="left:8px;top:760px;width:19px;height:31px;background:#e8ecf0;border-top:1px solid #000;border-right:1px solid #000"></div>
<div class="a" style="left:27px;top:761px;width:122px;height:29px;background:#000"></div>
<div class="t" style="left:27px;top:769px;width:122px;text-align:center;font-size:12px;font-weight:bold;color:#fff">M1:MR01&nbsp; J1-R1-P15</div>
<div class="a" style="left:148px;top:760px;width:1px;height:31px;background:#a0a0a0"></div>
<div class="a" style="left:196px;top:760px;width:1px;height:31px;background:#a0a0a0"></div>
<div class="a" style="left:212px;top:760px;width:1px;height:31px;background:#a0a0a0"></div>
<div class="a" style="left:294px;top:760px;width:1px;height:31px;background:#a0a0a0"></div>
<div class="a" style="left:329px;top:760px;width:1px;height:31px;background:#a0a0a0"></div>
<div class="a" style="left:363px;top:760px;width:1px;height:31px;background:#a0a0a0"></div>
<div class="a" style="left:397px;top:760px;width:1px;height:31px;background:#a0a0a0"></div>
<div class="a" style="left:431px;top:760px;width:1px;height:31px;background:#a0a0a0"></div>
<div class="a" style="left:456px;top:760px;width:1px;height:31px;background:#a0a0a0"></div>
<div class="a" style="left:517px;top:760px;width:1px;height:31px;background:#a0a0a0"></div>
<div class="t" style="left:149px;top:769px;width:47px;text-align:center;font-size:13px">15</div>
<div class="cb" style="left:198px;top:768px"></div>
<div class="t" style="left:213px;top:769px;width:81px;text-align:center;font-size:13px">FEMALE-7</div>
<div class="t" style="left:295px;top:769px;width:34px;text-align:center;font-size:13px">7</div>
<div class="t" style="left:332px;top:769px;font-size:13px">G</div>
<div class="dd" style="left:345px;top:761px;width:17px;height:29px;border-radius:2px"></div>
<div class="t" style="left:364px;top:769px;width:33px;text-align:center;font-size:13px">621</div>
<div class="t" style="left:398px;top:769px;width:33px;text-align:center;font-size:13px">215</div>
<div class="t" style="left:432px;top:769px;width:24px;text-align:center;font-size:13px">12</div>
<div class="t" style="left:457px;top:769px;width:60px;text-align:center;font-size:13px">24Jun18</div>
<div class="a" style="left:27px;top:790px;width:491px;height:31px;background:#f2f2f2;border-top:1px solid #a0a0a0;border-bottom:1px solid #a0a0a0"></div>
<div class="a" style="left:518px;top:791px;width:21px;height:30px;background:#f2f2f2"></div>
<div class="a" style="left:8px;top:790px;width:19px;height:31px;background:#e8ecf0;border-top:1px solid #000;border-right:1px solid #000"></div>
<div class="a" style="left:27px;top:791px;width:122px;height:29px;background:#000"></div>
<div class="t" style="left:27px;top:799px;width:122px;text-align:center;font-size:12px;font-weight:bold;color:#fff">M1:MR01&nbsp; J1-R1-P16</div>
<div class="a" style="left:148px;top:790px;width:1px;height:31px;background:#a0a0a0"></div>
<div class="a" style="left:196px;top:790px;width:1px;height:31px;background:#a0a0a0"></div>
<div class="a" style="left:212px;top:790px;width:1px;height:31px;background:#a0a0a0"></div>
<div class="a" style="left:294px;top:790px;width:1px;height:31px;background:#a0a0a0"></div>
<div class="a" style="left:329px;top:790px;width:1px;height:31px;background:#a0a0a0"></div>
<div class="a" style="left:363px;top:790px;width:1px;height:31px;background:#a0a0a0"></div>
<div class="a" style="left:397px;top:790px;width:1px;height:31px;background:#a0a0a0"></div>
<div class="a" style="left:431px;top:790px;width:1px;height:31px;background:#a0a0a0"></div>
<div class="a" style="left:456px;top:790px;width:1px;height:31px;background:#a0a0a0"></div>
<div class="a" style="left:517px;top:790px;width:1px;height:31px;background:#a0a0a0"></div>
<div class="t" style="left:149px;top:799px;width:47px;text-align:center;font-size:13px">16</div>
<div class="cb" style="left:198px;top:798px"></div>
<div class="t" style="left:213px;top:799px;width:81px;text-align:center;font-size:13px">FEMALE-8</div>
<div class="t" style="left:295px;top:799px;width:34px;text-align:center;font-size:13px">8</div>
<div class="t" style="left:332px;top:799px;font-size:13px">G</div>
<div class="dd" style="left:345px;top:791px;width:17px;height:29px;border-radius:2px"></div>
<div class="t" style="left:364px;top:799px;width:33px;text-align:center;font-size:13px">651</div>
<div class="t" style="left:398px;top:799px;width:33px;text-align:center;font-size:13px">271</div>
<div class="t" style="left:432px;top:799px;width:24px;text-align:center;font-size:13px">12</div>
<div class="t" style="left:457px;top:799px;width:60px;text-align:center;font-size:13px">24Jun18</div>
<div class="a" style="left:8px;top:820px;width:19px;height:1px;background:#000"></div>
<div class="a" style="left:8px;top:890px;width:531px;height:1px;background:#417e7e"></div>
<div class="a" style="left:8px;top:891px;width:531px;height:78px;background:#fff"></div>
<div class="a" style="left:9px;top:892px;width:530px;height:77px;background:#417e7e;border-left:1px solid #2f7474;border-top:1px solid #2f7474"></div>
<div class="bev" style="left:33px;top:898px;width:87px;height:65px"><div class="t" style="left:-10px;right:-4px;top:2px;text-align:center;font-size:17px;font-weight:bold;color:#008000;line-height:19px;white-space:normal;letter-spacing:.6px">Add<br>Multiple<br>TP</div></div>
<div class="bev" style="left:129px;top:899px;width:87px;height:64px"><div class="t" style="left:-6px;right:-4px;top:3px;text-align:center;font-size:17px;font-weight:bold;color:#a03030;line-height:19px;white-space:normal;letter-spacing:.6px">Rapid<br>Edit<br>Mode</div></div>
<div class="bev" style="left:224px;top:898px;width:78px;height:29px"><div class="t" style="left:4px;top:7px;font-size:12px;font-weight:bold;color:#a8a8a8">TP&nbsp; Up</div><div class="t" style="left:60px;top:7px;font-size:12px;font-weight:bold;color:#a8a8a8">&#923;</div></div>
<div class="bev" style="left:224px;top:933px;width:78px;height:29px"><div class="t" style="left:1px;top:7px;font-size:12px;font-weight:bold;color:#222;letter-spacing:.6px">TP Down V</div></div>
<div class="t" style="left:309px;top:909px;font-size:13px;font-weight:bold;color:#7030a0">Move By</div>
<div class="a" style="left:307px;top:935px;width:61px;height:27px;background:#fff;border:1px solid #777"></div>
<div class="t" style="left:321px;top:939px;font-size:17px">1</div>
<div class="dd" style="left:349px;top:937px;width:17px;height:23px"></div>
<div class="bev" style="left:371px;top:898px;width:78px;height:29px"><div class="t" style="left:3px;top:6px;font-size:12px;font-weight:bold;color:#a8a8a8;letter-spacing:.5px">TP First</div><svg class="a" style="left:57px;top:9px" width="10" height="9"><path d="M0.5 8 L4.75 0.5 L9 8Z" fill="#a8a8a8"/></svg></div>
<div class="bev" style="left:371px;top:933px;width:78px;height:29px"><div class="t" style="left:3px;top:6px;font-size:12px;font-weight:bold;color:#222;letter-spacing:.5px">TP Last</div><svg class="a" style="left:57px;top:8px" width="10" height="9"><path d="M0.5 0.5 L9 0.5 L4.75 8.5Z" fill="#333"/></svg></div>
<div class="bev" style="left:455px;top:898px;width:62px;height:64px"><div class="t" style="left:0;right:0;top:31px;text-align:center;font-size:16.5px;color:#333;letter-spacing:.3px">Exit</div></div>
<svg class="a" style="left:476px;top:913px" width="20" height="16"><rect x="1.5" y="1" width="8" height="12" fill="#efe2b0" stroke="#8a7a50" stroke-width=".8"/><path d="M1.5 1.5 L6.5 3.5 L6.5 15 L1.5 13Z" fill="#d9a83a" stroke="#6a5020" stroke-width=".7"/><path d="M9 7 L13 3 L13 5 L18 5 L18 9 L13 9 L13 11Z" fill="#3c7ce0" stroke="#1a4aa0" stroke-width=".5"/></svg>
<div class="a" style="left:8px;top:969px;width:531px;height:19px;background:linear-gradient(#f6f6f7 0%,#f0f0f1 45%,#e6e7ea 55%,#e6e7ea 100%);border-top:1px solid #fff"></div>
<div class="t" style="left:13px;top:973px;font-size:11.5px;color:#555;transform:scaleX(.94);transform-origin:0 0">Record:</div>
<svg class="a" style="left:0;top:960px" width="200" height="30"><rect x="58.5" y="15" width="1.6" height="7.5" fill="#333"/><path d="M65.5 15 L61 18.75 L65.5 22.5Z" fill="#333"/><path d="M81.5 15 L77 18.75 L81.5 22.5Z" fill="#c0c0c0"/><path d="M146 15 L150.5 18.75 L146 22.5Z" fill="#333"/><path d="M161.5 15 L166 18.75 L161.5 22.5Z" fill="#333"/><rect x="166.5" y="15" width="1.6" height="7.5" fill="#333"/><path d="M176 15 L180 18.75 L176 22.5Z" fill="#c8c8c8"/><rect x="181" y="15" width="7" height="7" fill="#f6efd2" stroke="#eadfb0" stroke-width=".8" stroke-dasharray="1 1"/></svg>
<div class="a" style="left:87px;top:971px;width:50px;height:16px;background:#fff;border:1px solid #ddd"></div>
<div class="t" style="left:89px;top:973px;font-size:11.5px;color:#111">1 of 16</div>
<div class="a" style="left:194px;top:970px;width:1px;height:18px;background:#c8c8c8"></div>
<svg class="a" style="left:203px;top:971px" width="16" height="16"><path d="M1 1.5 L12 1.5 L7.5 7 L7.5 13.5 L5.5 12 L5.5 7Z" fill="#d8d8d8" stroke="#9a9a9a" stroke-width="1"/><path d="M8 8 L14 14 M14 8 L8 14" stroke="#8a8a8a" stroke-width="1.6"/></svg>
<div class="t" style="left:221px;top:973px;font-size:12px;color:#aaa;letter-spacing:.3px">No Filter</div>
<div class="a" style="left:274px;top:970px;width:1px;height:18px;background:#c8c8c8"></div>
<div class="a" style="left:280px;top:971px;width:70px;height:16px;background:#fff;border:1px solid #ddd"></div>
<div class="t" style="left:283px;top:973px;font-size:11.5px;color:#111;transform:scaleX(.9);transform-origin:0 0">Search</div>
<div class="a" style="left:539px;top:117px;width:2px;height:872px;background:#6f6f6f;border-right:1px solid #aaa"></div>
<div class="a" style="left:541px;top:117px;width:811px;height:872px;background:#c0c0c0"></div>
<div class="a" style="left:541px;top:146px;width:739px;height:569px;background:#fff;border:1px solid #80848c;border-top-color:#9a9a9a;box-shadow:2px 2px 0 #fff"></div>
<div class="a" style="left:543px;top:119px;width:154px;height:28px;border:1px solid #9a9a9a;border-bottom:none;background:linear-gradient(#f2f2f2 0%,#ececec 45%,#d9d9d9 55%,#d4d4d4 100%)"></div>
<div class="t" style="left:548px;top:123px;font-size:18px;letter-spacing:.25px">Test Point Details</div>
<div class="a" style="left:697px;top:117px;width:75px;height:31px;background:#fff"></div>
<div class="t" style="left:703px;top:121px;font-size:18px;letter-spacing:.4px">Testing</div>
<div class="a" style="left:772px;top:119px;width:113px;height:28px;border:1px solid #9a9a9a;border-bottom:none;background:linear-gradient(#f2f2f2 0%,#ececec 45%,#d9d9d9 55%,#d4d4d4 100%)"></div>
<div class="t" style="left:777px;top:123px;font-size:18px;letter-spacing:.25px">Connections</div>
<div class="a" style="left:885px;top:119px;width:151px;height:28px;border:1px solid #9a9a9a;border-bottom:none;background:linear-gradient(#f2f2f2 0%,#ececec 45%,#d9d9d9 55%,#d4d4d4 100%)"></div>
<div class="t" style="left:890px;top:123px;font-size:18px;letter-spacing:.25px">Extended Details</div>
<div class="a" style="left:1036px;top:119px;width:76px;height:28px;border:1px solid #9a9a9a;border-bottom:none;background:linear-gradient(#f2f2f2 0%,#ececec 45%,#d9d9d9 55%,#d4d4d4 100%)"></div>
<div class="t" style="left:1041px;top:123px;font-size:18px;letter-spacing:.25px">Settings</div>
<div class="a" style="left:557px;top:158px;width:703px;height:533px;background:#fff;border-left:2px solid #6f6f6f;border-top:2px solid #6f6f6f;border-right:1px solid #e8e8e8;border-bottom:1px solid #e8e8e8"></div>
<div class="a" style="left:559px;top:160px;width:700px;height:44px;background:#e3ead6"></div>
<div class="t" style="left:586px;top:162px;width:44px;text-align:center;font-size:16px;font-weight:bold;line-height:19px;white-space:normal;letter-spacing:.4px">Test<br>Type</div>
<div class="t" style="left:640px;top:174px;font-size:16px;font-weight:bold;letter-spacing:.3px">Enabled</div>
<div class="t" style="left:712px;top:174px;font-size:16px;font-weight:bold;letter-spacing:.65px">Profile Name</div>
<div class="t" style="left:899px;top:174px;font-size:16px;font-weight:bold;letter-spacing:.65px">Test Against</div>
<div class="bev" style="left:1083px;top:164px;width:173px;height:37px"><div class="t" style="left:0;right:0;top:7px;text-align:center;font-size:23px;color:#8b2a2a;transform:scaleX(.92)">Add Test Profile</div></div>
<div class="a" style="left:578px;top:204px;width:682px;height:45px;background:#ffffff"></div>
<div class="a" style="left:559px;top:204px;width:19px;height:46px;background:#261507;border-top:1px solid #000;border-bottom:1px solid #000;border-right:1px solid #000"></div>
<div class="a" style="left:567px;top:207px;width:0;height:0;border-top:6px solid transparent;border-bottom:6px solid transparent;border-left:7px solid #fff"></div>
<div class="a" style="left:578px;top:207px;width:58px;height:39px;border:1px solid #a6a6a6;background:#ffffff"></div>
<div class="a" style="left:638px;top:207px;width:69px;height:39px;border:1px solid #a6a6a6;background:#ffffff"></div>
<div class="a" style="left:711px;top:207px;width:183px;height:39px;border:1px solid #a6a6a6;background:#ffffff"></div>
<div class="a" style="left:898px;top:207px;width:220px;height:39px;border:1px solid #a6a6a6;background:#ffffff"></div>
<div class="t" style="left:578px;top:217px;width:58px;text-align:center;font-size:22px;color:#008000;transform:scaleX(.87)">CON</div>
<div class="t" style="left:638px;top:217px;width:51px;text-align:center;font-size:22px;color:#008000;transform:scaleX(.87)">YES</div>
<div class="dd" style="left:689px;top:208px;width:17px;height:37px;border-radius:2px"></div>
<div class="t" style="left:713px;top:217px;font-size:22px;color:#008000;transform:scaleX(.93);transform-origin:0 0">CON-Default</div>
<div class="t" style="left:900px;top:217px;font-size:22px;color:#008000;transform:scaleX(.93);transform-origin:0 0">Nominated NG</div>
<div class="bev" style="left:1123px;top:207px;width:65px;height:38px"><svg class="a" style="left:-1px;top:0px" width="64" height="37"><path d="M25.44 21.44 L35.44 11.44 L37.56 13.56 L27.56 23.56Z" fill="#efe07a"/><path d="M27.56 23.56 L37.56 13.56" stroke="#5a4a20" stroke-width="1"/><path d="M25.44 21.44 L35.44 11.44" stroke="#b8a850" stroke-width=".6"/><path d="M35.44 11.44 L37.2 9.7 Q38.6 9 39.4 10 Q40.2 11 39.4 11.8 L37.56 13.56Z" fill="#c0524a"/><path d="M25.44 21.44 L27.56 23.56 L23.8 25.2Z" fill="#f4f0e8" stroke="#222" stroke-width=".7"/><path d="M24.6 24.4 L23.8 25.2" stroke="#111" stroke-width="1.6"/></svg></div>
<div class="bev" style="left:1191px;top:207px;width:65px;height:38px"><svg class="a" style="left:-1px;top:0px" width="64" height="37"><rect x="23.5" y="16.5" width="12" height="6" fill="#fff" stroke="#8090a0" stroke-width="1"/><path d="M24 23 L36 23 L36 17" stroke="#1a2430" stroke-width="1.3" fill="none"/><rect x="25" y="18" width="9" height="3" fill="#3a6ee8"/><path d="M31 11.2 L38.6 19.2 M38.6 11.2 L31 19.2" stroke="#ff3a28" stroke-width="1.7"/></svg></div>
<div class="a" style="left:578px;top:249px;width:682px;height:45px;background:#f0f0f0"></div>
<div class="a" style="left:559px;top:249px;width:19px;height:46px;background:#dde9f7;border-top:1px solid #000;border-bottom:1px solid #000;border-right:1px solid #000"></div>
<div class="a" style="left:578px;top:252px;width:58px;height:39px;border:1px solid #a6a6a6;background:#f0f0f0"></div>
<div class="a" style="left:638px;top:252px;width:69px;height:39px;border:1px solid #a6a6a6;background:#f0f0f0"></div>
<div class="a" style="left:711px;top:252px;width:183px;height:39px;border:1px solid #a6a6a6;background:#f0f0f0"></div>
<div class="a" style="left:898px;top:252px;width:220px;height:39px;border:1px solid #a6a6a6;background:#f0f0f0"></div>
<div class="t" style="left:578px;top:262px;width:58px;text-align:center;font-size:22px;color:#008000;transform:scaleX(.87)">CON</div>
<div class="t" style="left:638px;top:262px;width:51px;text-align:center;font-size:22px;color:#008000;transform:scaleX(.87)">YES</div>
<div class="dd" style="left:689px;top:253px;width:17px;height:37px;border-radius:2px"></div>
<div class="t" style="left:713px;top:262px;font-size:22px;color:#008000;transform:scaleX(.87);transform-origin:0 0">CON-2</div>
<div class="t" style="left:900px;top:262px;font-size:22px;color:#008000;transform:scaleX(.87);transform-origin:0 0">MALE-7</div>
<div class="bev" style="left:1123px;top:252px;width:65px;height:38px"><svg class="a" style="left:-1px;top:0px" width="64" height="37"><path d="M25.44 21.44 L35.44 11.44 L37.56 13.56 L27.56 23.56Z" fill="#efe07a"/><path d="M27.56 23.56 L37.56 13.56" stroke="#5a4a20" stroke-width="1"/><path d="M25.44 21.44 L35.44 11.44" stroke="#b8a850" stroke-width=".6"/><path d="M35.44 11.44 L37.2 9.7 Q38.6 9 39.4 10 Q40.2 11 39.4 11.8 L37.56 13.56Z" fill="#c0524a"/><path d="M25.44 21.44 L27.56 23.56 L23.8 25.2Z" fill="#f4f0e8" stroke="#222" stroke-width=".7"/><path d="M24.6 24.4 L23.8 25.2" stroke="#111" stroke-width="1.6"/></svg></div>
<div class="bev" style="left:1191px;top:252px;width:65px;height:38px"><svg class="a" style="left:-1px;top:0px" width="64" height="37"><rect x="23.5" y="16.5" width="12" height="6" fill="#fff" stroke="#8090a0" stroke-width="1"/><path d="M24 23 L36 23 L36 17" stroke="#1a2430" stroke-width="1.3" fill="none"/><rect x="25" y="18" width="9" height="3" fill="#3a6ee8"/><path d="M31 11.2 L38.6 19.2 M38.6 11.2 L31 19.2" stroke="#ff3a28" stroke-width="1.7"/></svg></div>
<div class="a" style="left:578px;top:294px;width:682px;height:45px;background:#ffffff"></div>
<div class="a" style="left:559px;top:294px;width:19px;height:46px;background:#dde9f7;border-top:1px solid #000;border-bottom:1px solid #000;border-right:1px solid #000"></div>
<div class="a" style="left:578px;top:297px;width:58px;height:39px;border:1px solid #a6a6a6;background:#ffffff"></div>
<div class="a" style="left:638px;top:297px;width:69px;height:39px;border:1px solid #a6a6a6;background:#ffffff"></div>
<div class="a" style="left:711px;top:297px;width:183px;height:39px;border:1px solid #a6a6a6;background:#ffffff"></div>
<div class="a" style="left:898px;top:297px;width:220px;height:39px;border:1px solid #a6a6a6;background:#ffffff"></div>
<div class="t" style="left:578px;top:307px;width:58px;text-align:center;font-size:22px;color:#ff0000;transform:scaleX(.87)">CON</div>
<div class="t" style="left:638px;top:307px;width:51px;text-align:center;font-size:22px;color:#ff0000;transform:scaleX(.87)">NO</div>
<div class="dd" style="left:689px;top:298px;width:17px;height:37px;border-radius:2px"></div>
<div class="t" style="left:713px;top:307px;font-size:22px;color:#ff0000;transform:scaleX(.87);transform-origin:0 0">CON-3</div>
<div class="t" style="left:900px;top:307px;font-size:22px;color:#ff0000;transform:scaleX(.87);transform-origin:0 0">FEMALE-2</div>
<div class="bev" style="left:1123px;top:297px;width:65px;height:38px"><svg class="a" style="left:-1px;top:0px" width="64" height="37"><path d="M25.44 21.44 L35.44 11.44 L37.56 13.56 L27.56 23.56Z" fill="#efe07a"/><path d="M27.56 23.56 L37.56 13.56" stroke="#5a4a20" stroke-width="1"/><path d="M25.44 21.44 L35.44 11.44" stroke="#b8a850" stroke-width=".6"/><path d="M35.44 11.44 L37.2 9.7 Q38.6 9 39.4 10 Q40.2 11 39.4 11.8 L37.56 13.56Z" fill="#c0524a"/><path d="M25.44 21.44 L27.56 23.56 L23.8 25.2Z" fill="#f4f0e8" stroke="#222" stroke-width=".7"/><path d="M24.6 24.4 L23.8 25.2" stroke="#111" stroke-width="1.6"/></svg></div>
<div class="bev" style="left:1191px;top:297px;width:65px;height:38px"><svg class="a" style="left:-1px;top:0px" width="64" height="37"><rect x="23.5" y="16.5" width="12" height="6" fill="#fff" stroke="#8090a0" stroke-width="1"/><path d="M24 23 L36 23 L36 17" stroke="#1a2430" stroke-width="1.3" fill="none"/><rect x="25" y="18" width="9" height="3" fill="#3a6ee8"/><path d="M31 11.2 L38.6 19.2 M38.6 11.2 L31 19.2" stroke="#ff3a28" stroke-width="1.7"/></svg></div>
<div class="a" style="left:578px;top:339px;width:682px;height:45px;background:#f0f0f0"></div>
<div class="a" style="left:559px;top:339px;width:19px;height:46px;background:#dde9f7;border-top:1px solid #000;border-bottom:1px solid #000;border-right:1px solid #000"></div>
<div class="a" style="left:578px;top:342px;width:58px;height:39px;border:1px solid #a6a6a6;background:#f0f0f0"></div>
<div class="a" style="left:638px;top:342px;width:69px;height:39px;border:1px solid #a6a6a6;background:#f0f0f0"></div>
<div class="a" style="left:711px;top:342px;width:183px;height:39px;border:1px solid #a6a6a6;background:#f0f0f0"></div>
<div class="a" style="left:898px;top:342px;width:220px;height:39px;border:1px solid #a6a6a6;background:#f0f0f0"></div>
<div class="t" style="left:578px;top:352px;width:58px;text-align:center;font-size:22px;color:#008000;transform:scaleX(.87)">DIO</div>
<div class="t" style="left:638px;top:352px;width:51px;text-align:center;font-size:22px;color:#008000;transform:scaleX(.87)">YES</div>
<div class="dd" style="left:689px;top:343px;width:17px;height:37px;border-radius:2px"></div>
<div class="t" style="left:713px;top:352px;font-size:22px;color:#008000;transform:scaleX(.87);transform-origin:0 0">DIO-1</div>
<div class="t" style="left:900px;top:352px;font-size:22px;color:#008000;transform:scaleX(.93);transform-origin:0 0">Nominated NG</div>
<div class="bev" style="left:1123px;top:342px;width:65px;height:38px"><svg class="a" style="left:-1px;top:0px" width="64" height="37"><path d="M25.44 21.44 L35.44 11.44 L37.56 13.56 L27.56 23.56Z" fill="#efe07a"/><path d="M27.56 23.56 L37.56 13.56" stroke="#5a4a20" stroke-width="1"/><path d="M25.44 21.44 L35.44 11.44" stroke="#b8a850" stroke-width=".6"/><path d="M35.44 11.44 L37.2 9.7 Q38.6 9 39.4 10 Q40.2 11 39.4 11.8 L37.56 13.56Z" fill="#c0524a"/><path d="M25.44 21.44 L27.56 23.56 L23.8 25.2Z" fill="#f4f0e8" stroke="#222" stroke-width=".7"/><path d="M24.6 24.4 L23.8 25.2" stroke="#111" stroke-width="1.6"/></svg></div>
<div class="bev" style="left:1191px;top:342px;width:65px;height:38px"><svg class="a" style="left:-1px;top:0px" width="64" height="37"><rect x="23.5" y="16.5" width="12" height="6" fill="#fff" stroke="#8090a0" stroke-width="1"/><path d="M24 23 L36 23 L36 17" stroke="#1a2430" stroke-width="1.3" fill="none"/><rect x="25" y="18" width="9" height="3" fill="#3a6ee8"/><path d="M31 11.2 L38.6 19.2 M38.6 11.2 L31 19.2" stroke="#ff3a28" stroke-width="1.7"/></svg></div>
<div class="a" style="left:578px;top:384px;width:682px;height:45px;background:#ffffff"></div>
<div class="a" style="left:559px;top:384px;width:19px;height:46px;background:#dde9f7;border-top:1px solid #000;border-bottom:1px solid #000;border-right:1px solid #000"></div>
<div class="a" style="left:578px;top:387px;width:58px;height:39px;border:1px solid #a6a6a6;background:#ffffff"></div>
<div class="a" style="left:638px;top:387px;width:69px;height:39px;border:1px solid #a6a6a6;background:#ffffff"></div>
<div class="a" style="left:711px;top:387px;width:183px;height:39px;border:1px solid #a6a6a6;background:#ffffff"></div>
<div class="a" style="left:898px;top:387px;width:220px;height:39px;border:1px solid #a6a6a6;background:#ffffff"></div>
<div class="t" style="left:578px;top:397px;width:58px;text-align:center;font-size:22px;color:#008000;transform:scaleX(.87)">TDR</div>
<div class="t" style="left:638px;top:397px;width:51px;text-align:center;font-size:22px;color:#008000;transform:scaleX(.87)">YES</div>
<div class="dd" style="left:689px;top:388px;width:17px;height:37px;border-radius:2px"></div>
<div class="t" style="left:713px;top:397px;font-size:22px;color:#008000;transform:scaleX(.87);transform-origin:0 0">TDR-1</div>
<div class="t" style="left:900px;top:397px;font-size:22px;color:#008000;transform:scaleX(.87);transform-origin:0 0">FEMALE-8</div>
<div class="bev" style="left:1123px;top:387px;width:65px;height:38px"><svg class="a" style="left:-1px;top:0px" width="64" height="37"><path d="M25.44 21.44 L35.44 11.44 L37.56 13.56 L27.56 23.56Z" fill="#efe07a"/><path d="M27.56 23.56 L37.56 13.56" stroke="#5a4a20" stroke-width="1"/><path d="M25.44 21.44 L35.44 11.44" stroke="#b8a850" stroke-width=".6"/><path d="M35.44 11.44 L37.2 9.7 Q38.6 9 39.4 10 Q40.2 11 39.4 11.8 L37.56 13.56Z" fill="#c0524a"/><path d="M25.44 21.44 L27.56 23.56 L23.8 25.2Z" fill="#f4f0e8" stroke="#222" stroke-width=".7"/><path d="M24.6 24.4 L23.8 25.2" stroke="#111" stroke-width="1.6"/></svg></div>
<div class="bev" style="left:1191px;top:387px;width:65px;height:38px"><svg class="a" style="left:-1px;top:0px" width="64" height="37"><rect x="23.5" y="16.5" width="12" height="6" fill="#fff" stroke="#8090a0" stroke-width="1"/><path d="M24 23 L36 23 L36 17" stroke="#1a2430" stroke-width="1.3" fill="none"/><rect x="25" y="18" width="9" height="3" fill="#3a6ee8"/><path d="M31 11.2 L38.6 19.2 M38.6 11.2 L31 19.2" stroke="#ff3a28" stroke-width="1.7"/></svg></div>
<div class="a" style="left:578px;top:429px;width:682px;height:45px;background:#f0f0f0"></div>
<div class="a" style="left:559px;top:429px;width:19px;height:46px;background:#dde9f7;border-top:1px solid #000;border-bottom:1px solid #000;border-right:1px solid #000"></div>
<div class="a" style="left:578px;top:432px;width:58px;height:39px;border:1px solid #a6a6a6;background:#f0f0f0"></div>
<div class="a" style="left:638px;top:432px;width:69px;height:39px;border:1px solid #a6a6a6;background:#f0f0f0"></div>
<div class="a" style="left:711px;top:432px;width:183px;height:39px;border:1px solid #a6a6a6;background:#f0f0f0"></div>
<div class="a" style="left:898px;top:432px;width:220px;height:39px;border:1px solid #a6a6a6;background:#f0f0f0"></div>
<div class="t" style="left:578px;top:442px;width:58px;text-align:center;font-size:22px;color:#008000;transform:scaleX(.87)">TRK</div>
<div class="t" style="left:638px;top:442px;width:51px;text-align:center;font-size:22px;color:#008000;transform:scaleX(.87)">YES</div>
<div class="dd" style="left:689px;top:433px;width:17px;height:37px;border-radius:2px"></div>
<div class="t" style="left:713px;top:442px;font-size:22px;color:#008000;transform:scaleX(.87);transform-origin:0 0">TRK-1</div>
<div class="t" style="left:900px;top:442px;font-size:22px;color:#008000;transform:scaleX(.93);transform-origin:0 0">Nominated NG</div>
<div class="bev" style="left:1123px;top:432px;width:65px;height:38px"><svg class="a" style="left:-1px;top:0px" width="64" height="37"><path d="M25.44 21.44 L35.44 11.44 L37.56 13.56 L27.56 23.56Z" fill="#efe07a"/><path d="M27.56 23.56 L37.56 13.56" stroke="#5a4a20" stroke-width="1"/><path d="M25.44 21.44 L35.44 11.44" stroke="#b8a850" stroke-width=".6"/><path d="M35.44 11.44 L37.2 9.7 Q38.6 9 39.4 10 Q40.2 11 39.4 11.8 L37.56 13.56Z" fill="#c0524a"/><path d="M25.44 21.44 L27.56 23.56 L23.8 25.2Z" fill="#f4f0e8" stroke="#222" stroke-width=".7"/><path d="M24.6 24.4 L23.8 25.2" stroke="#111" stroke-width="1.6"/></svg></div>
<div class="bev" style="left:1191px;top:432px;width:65px;height:38px"><svg class="a" style="left:-1px;top:0px" width="64" height="37"><rect x="23.5" y="16.5" width="12" height="6" fill="#fff" stroke="#8090a0" stroke-width="1"/><path d="M24 23 L36 23 L36 17" stroke="#1a2430" stroke-width="1.3" fill="none"/><rect x="25" y="18" width="9" height="3" fill="#3a6ee8"/><path d="M31 11.2 L38.6 19.2 M38.6 11.2 L31 19.2" stroke="#ff3a28" stroke-width="1.7"/></svg></div>
<div class="a" style="left:545px;top:961px;width:109px;height:28px;background:#0000ff;border:1px solid #f0f0e8;border-top-color:#8a8a7a;border-left-color:#8a8a7a"></div>
<div class="t" style="left:547px;top:965px;font-size:18px;color:#fff;letter-spacing:.17px">Display Area</div>
<div class="a" style="left:657px;top:961px;width:37px;height:28px;background:#3333ff;border:1px solid #f0f0e8;border-top-color:#8a8a7a;border-left-color:#8a8a7a"></div>
<div class="bev" style="left:697px;top:963px;width:85px;height:26px"><div class="t" style="left:5px;top:5px;font-size:13px;color:#333;letter-spacing:.45px">Nodal View</div></div>
<div class="a" style="left:782px;top:963px;width:493px;height:25px;background:#fff"></div>
<div class="t" style="left:782px;top:965px;width:493px;text-align:center;font-size:20px;letter-spacing:.57px">Current Test Point should be visible</div>
<svg class="a" style="left:0;top:0" width="1547" height="1002"><line x1="628" y1="47" x2="698" y2="133" stroke="#2088f8" stroke-width="1.2"/><line x1="756" y1="47" x2="841" y2="203" stroke="#2088f8" stroke-width="1.2"/><line x1="1008" y1="47" x2="1083" y2="160" stroke="#2088f8" stroke-width="1.2"/><line x1="1163" y1="47" x2="1156" y2="200" stroke="#2088f8" stroke-width="1.2"/><line x1="1285" y1="47" x2="1222" y2="199" stroke="#2088f8" stroke-width="1.2"/><line x1="1425" y1="232" x2="1128" y2="305" stroke="#2088f8" stroke-width="1.2"/></svg>
<div class="t" style="left:528px;top:15px;width:200px;text-align:center;font-size:12.5px;letter-spacing:.25px">Testing Tab</div>
<div class="a" style="left:614px;top:33px;width:28px;height:28px;border-radius:8px;background:#0a80ff;box-shadow:2px 2px 3px rgba(0,0,0,.5);color:#fff;font-size:13px;text-align:center;line-height:30px">1</div>
<div class="t" style="left:656px;top:15px;width:200px;text-align:center;font-size:12.5px;letter-spacing:.25px">Default Test Profile</div>
<div class="a" style="left:742px;top:33px;width:28px;height:28px;border-radius:8px;background:#0a80ff;box-shadow:2px 2px 3px rgba(0,0,0,.5);color:#fff;font-size:13px;text-align:center;line-height:30px">2</div>
<div class="t" style="left:908px;top:15px;width:200px;text-align:center;font-size:12.5px;letter-spacing:.25px">Add Test Profile</div>
<div class="a" style="left:994px;top:33px;width:28px;height:28px;border-radius:8px;background:#0a80ff;box-shadow:2px 2px 3px rgba(0,0,0,.5);color:#fff;font-size:13px;text-align:center;line-height:30px">3</div>
<div class="t" style="left:1063px;top:15px;width:200px;text-align:center;font-size:12.5px;letter-spacing:.25px">Edit Button</div>
<div class="a" style="left:1149px;top:33px;width:28px;height:28px;border-radius:8px;background:#0a80ff;box-shadow:2px 2px 3px rgba(0,0,0,.5);color:#fff;font-size:13px;text-align:center;line-height:30px">4</div>
<div class="t" style="left:1185px;top:15px;width:200px;text-align:center;font-size:12.5px;letter-spacing:.25px">Delete Button</div>
<div class="a" style="left:1271px;top:33px;width:28px;height:28px;border-radius:8px;background:#0a80ff;box-shadow:2px 2px 3px rgba(0,0,0,.5);color:#fff;font-size:13px;text-align:center;line-height:30px">5</div>
<div class="a" style="left:1411px;top:218px;width:28px;height:28px;border-radius:8px;background:#0a80ff;box-shadow:2px 2px 3px rgba(0,0,0,.5);color:#fff;font-size:13px;text-align:center;line-height:30px">6</div>
<div class="t" style="left:1444px;top:227px;font-size:12.5px;letter-spacing:.2px">Enable/Disable</div>
</body></html>
